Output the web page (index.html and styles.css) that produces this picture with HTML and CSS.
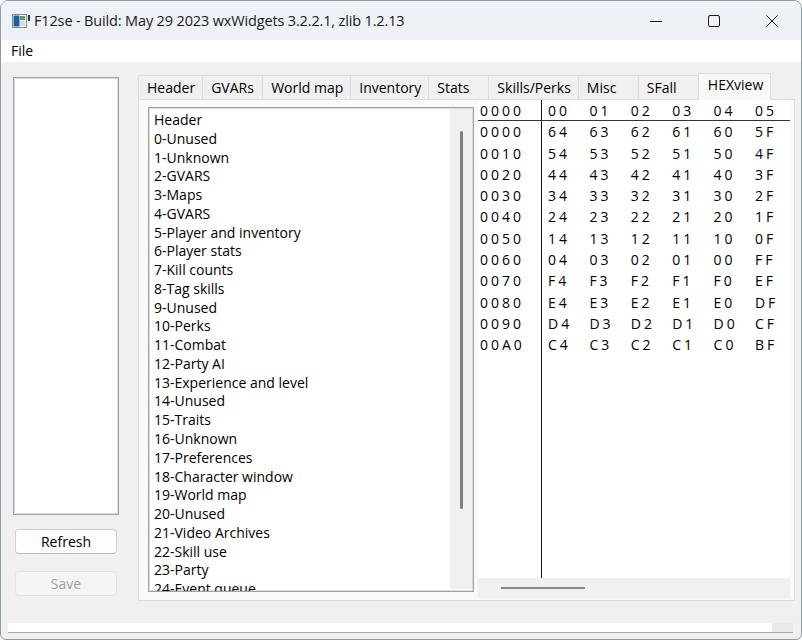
FILE: index.html
```html
<!DOCTYPE html>
<html lang="en">

<head>
    <meta charset="UTF-8">
    <title>F12se - Build: May 29 2023 wxWidgets 3.2.2.1, zlib 1.2.13</title>
    <link rel="stylesheet" href="styles.css">
</head>

<body>
    <div class="window">
        <!-- Title bar -->
        <div class="titlebar">
            <svg class="app-icon" width="18" height="14" viewBox="0 0 18 14">
                <rect x="0.5" y="0.5" width="14" height="13" fill="#fff" stroke="#7f8c99"/>
                <rect x="1.5" y="1.5" width="6" height="11" fill="#1f5f9f"/>
                <rect x="8" y="2" width="5" height="4" fill="#4fa36b"/>
                <rect x="8" y="7" width="5" height="5" fill="#d8dde3"/>
                <rect x="16" y="1" width="2" height="6" fill="#333"/>
            </svg>
            <span class="title">F12se - Build: May 29 2023 wxWidgets 3.2.2.1, zlib 1.2.13</span>
            <div class="caption-buttons">
                <span class="caption-btn">
                    <svg width="14" height="14" viewBox="0 0 14 14"><path d="M1 7.5h12" stroke="#1b1b1b" stroke-width="1"/></svg>
                </span>
                <span class="caption-btn">
                    <svg width="14" height="14" viewBox="0 0 14 14"><rect x="1.5" y="1.5" width="11" height="11" rx="1.5" fill="none" stroke="#1b1b1b" stroke-width="1"/></svg>
                </span>
                <span class="caption-btn">
                    <svg width="14" height="14" viewBox="0 0 14 14"><path d="M1.5 1.5l11 11M12.5 1.5l-11 11" stroke="#1b1b1b" stroke-width="1"/></svg>
                </span>
            </div>
        </div>

        <!-- Menu -->
        <div class="menubar">
            <span class="menu-item">File</span>
        </div>

        <div class="client">
            <!-- Left column: save slots -->
            <div class="sidebar">
                <div class="listbox slot-list"></div>
                <button class="btn refresh-btn">Refresh</button>
                <button class="btn save-btn" disabled>Save</button>
            </div>

            <!-- Notebook -->
            <div class="notebook">
                <div class="tabs">
                    <span class="tab">Header</span>
                    <span class="tab">GVARs</span>
                    <span class="tab">World map</span>
                    <span class="tab">Inventory</span>
                    <span class="tab">Stats</span>
                    <span class="tab">Skills/Perks</span>
                    <span class="tab">Misc</span>
                    <span class="tab">SFall</span>
                    <span class="tab active">HEXview</span>
                </div>
                <div class="page">
                    <div class="listbox sections">
                        <ul class="section-list">
                            <li>Header</li>
                            <li>0-Unused</li>
                            <li>1-Unknown</li>
                            <li>2-GVARS</li>
                            <li>3-Maps</li>
                            <li>4-GVARS</li>
                            <li>5-Player and inventory</li>
                            <li>6-Player stats</li>
                            <li>7-Kill counts</li>
                            <li>8-Tag skills</li>
                            <li>9-Unused</li>
                            <li>10-Perks</li>
                            <li>11-Combat</li>
                            <li>12-Party AI</li>
                            <li>13-Experience and level</li>
                            <li>14-Unused</li>
                            <li>15-Traits</li>
                            <li>16-Unknown</li>
                            <li>17-Preferences</li>
                            <li>18-Character window</li>
                            <li>19-World map</li>
                            <li>20-Unused</li>
                            <li>21-Video Archives</li>
                            <li>22-Skill use</li>
                            <li>23-Party</li>
                            <li>24-Event queue</li>
                        </ul>
                        <div class="vscroll"><div class="vthumb"></div></div>
                    </div>

                    <div class="hexview">
                        <div class="hex-grid">
                            <span class="hx head label">0000</span>
                            <span class="hx head">00</span><span class="hx head">01</span><span class="hx head">02</span>
                            <span class="hx head">03</span><span class="hx head">04</span><span class="hx head">05</span>

                            <span class="hx label">0000</span>
                            <span class="hx">64</span><span class="hx">63</span><span class="hx">62</span><span class="hx">61</span><span class="hx">60</span><span class="hx">5F</span>
                            <span class="hx label">0010</span>
                            <span class="hx">54</span><span class="hx">53</span><span class="hx">52</span><span class="hx">51</span><span class="hx">50</span><span class="hx">4F</span>
                            <span class="hx label">0020</span>
                            <span class="hx">44</span><span class="hx">43</span><span class="hx">42</span><span class="hx">41</span><span class="hx">40</span><span class="hx">3F</span>
                            <span class="hx label">0030</span>
                            <span class="hx">34</span><span class="hx">33</span><span class="hx">32</span><span class="hx">31</span><span class="hx">30</span><span class="hx">2F</span>
                            <span class="hx label">0040</span>
                            <span class="hx">24</span><span class="hx">23</span><span class="hx">22</span><span class="hx">21</span><span class="hx">20</span><span class="hx">1F</span>
                            <span class="hx label">0050</span>
                            <span class="hx">14</span><span class="hx">13</span><span class="hx">12</span><span class="hx">11</span><span class="hx">10</span><span class="hx">0F</span>
                            <span class="hx label">0060</span>
                            <span class="hx">04</span><span class="hx">03</span><span class="hx">02</span><span class="hx">01</span><span class="hx">00</span><span class="hx">FF</span>
                            <span class="hx label">0070</span>
                            <span class="hx">F4</span><span class="hx">F3</span><span class="hx">F2</span><span class="hx">F1</span><span class="hx">F0</span><span class="hx">EF</span>
                            <span class="hx label">0080</span>
                            <span class="hx">E4</span><span class="hx">E3</span><span class="hx">E2</span><span class="hx">E1</span><span class="hx">E0</span><span class="hx">DF</span>
                            <span class="hx label">0090</span>
                            <span class="hx">D4</span><span class="hx">D3</span><span class="hx">D2</span><span class="hx">D1</span><span class="hx">D0</span><span class="hx">CF</span>
                            <span class="hx label">00A0</span>
                            <span class="hx">C4</span><span class="hx">C3</span><span class="hx">C2</span><span class="hx">C1</span><span class="hx">C0</span><span class="hx">BF</span>
                        </div>
                        <div class="hscroll"><div class="hthumb"></div></div>
                    </div>
                </div>
            </div>
        </div>

        <!-- Status bar -->
        <div class="statusbar">
            <div class="status-field"></div>
            <div class="status-grip"></div>
        </div>
    </div>
</body>

</html>
```

FILE: styles.css
```css
/* Reset */
* {
    margin: 0;
    padding: 0;
    box-sizing: border-box;
}

body {
    font-family: 'Open Sans', 'Noto Sans', sans-serif;
    background-color: #ffffff;
    color: #000;
    width: 802px;
    height: 640px;
    overflow: hidden;
}

/* Window frame */
.window {
    width: 802px;
    height: 640px;
    display: flex;
    flex-direction: column;
    background-color: #f0f0f0;
    border: 1px solid #8e9aa8;
    border-radius: 8px 8px 6px 6px;
    overflow: hidden;
}

/* Title bar */
.titlebar {
    height: 39px;
    flex: none;
    display: flex;
    align-items: center;
    background-color: #eef2f7;
    padding-left: 11px;
}

.app-icon {
    flex: none;
    margin-top: 1px;
}

.title {
    margin-left: 4px;
    font-size: 14.5px;
    letter-spacing: -0.15px;
    color: #1a1a1a;
    white-space: nowrap;
}

.caption-buttons {
    margin-left: auto;
    display: flex;
    height: 100%;
}

.caption-btn {
    width: 58px;
    height: 100%;
    display: flex;
    align-items: center;
    justify-content: center;
}

/* Menu bar */
.menubar {
    height: 22px;
    flex: none;
    background-color: #fff;
    display: flex;
    align-items: center;
    padding-left: 10px;
}

.menu-item {
    font-size: 14px;
    line-height: 18px;
}

/* Client area */
.client {
    flex: none;
    display: flex;
    padding: 10px 6px 0 12px;
}

.sidebar {
    width: 106px;
    flex: none;
    margin-top: 5px;
    display: flex;
    flex-direction: column;
    align-items: center;
}

.listbox {
    background-color: #fff;
    border: 1px solid #9fa3a8;
    box-shadow: inset 0 0 0 1px #d9dbde;
}

.slot-list {
    width: 106px;
    height: 438px;
}

.btn {
    width: 102px;
    height: 25px;
    font-family: inherit;
    font-size: 14px;
    border-radius: 4px;
    border: 1px solid #d0d0d0;
    border-bottom-color: #bcbcbc;
    background-color: #fdfdfd;
    color: #000;
}

.refresh-btn {
    margin-top: 14px;
}

.save-btn {
    margin-top: 17px;
    background-color: #f5f5f5;
    border-color: #e3e3e3;
    color: #a0a0a0;
}

/* Notebook */
.notebook {
    margin-left: 19px;
    flex: 1;
    display: flex;
    flex-direction: column;
}

.tabs {
    height: 27px;
    display: flex;
    align-items: flex-end;
}

.tab {
    height: 24px;
    min-width: 60px;
    padding: 0 7px 0 8px;
    font-size: 14px;
    line-height: 23px;
    background-color: #f0f0f0;
    border-top: 1px solid #dddddd;
    border-right: 1px solid #dddddd;
    white-space: nowrap;
}

.tab:first-child {
    border-left: 1px solid #dddddd;
}

.tab.active {
    height: 27px;
    line-height: 22px;
    padding-left: 9px;
    background-color: #f9f9f9;
    border-left: 1px solid #dddddd;
    margin-left: -1px;
    position: relative;
    margin-bottom: -1px;
}

.page {
    height: 502px;
    display: flex;
    align-items: flex-start;
    background-color: #f9f9f9;
    border: 1px solid #dddddd;
}

/* Sections list */
.sections {
    width: 326px;
    height: 485px;
    margin: 7px 4px 0 9px;
    display: flex;
    overflow: hidden;
}

.section-list {
    flex: 1;
    list-style: none;
    padding: 3px 0 0 5px;
    font-size: 14px;
    line-height: 18.76px;
    color: #000;
    overflow: hidden;
    white-space: nowrap;
}

.vscroll {
    width: 22px;
    flex: none;
    margin: 1px 1px 2px 0;
    background-color: #f0f0f0;
    display: flex;
    justify-content: center;
    padding-top: 22px;
}

.vthumb {
    width: 3px;
    height: 378px;
    border-radius: 2px;
    background-color: #808080;
}

/* Hex view */
.hexview {
    width: 312px;
    height: 498px;
    display: flex;
    flex-direction: column;
}

.hex-grid {
    flex: 1;
    display: grid;
    grid-template-columns: 64px repeat(6, 41.4px);
    grid-auto-rows: 21.3px;
    align-content: start;
    background: linear-gradient(#111, #111) 63px 0 / 1px 100% no-repeat, #fff;
}

.hx {
    font-size: 14px;
    line-height: 21px;
    letter-spacing: 3px;
    padding-left: 6px;
    white-space: nowrap;
}

.hx.label {
    padding-left: 2px;
}

.hx.head {
    border-bottom: 1px solid #333;
}

.hscroll {
    height: 20px;
    flex: none;
    background-color: #f0f0f0;
    padding: 9px 0 0 23px;
}

.hthumb {
    width: 84px;
    height: 2px;
    background-color: #858585;
}

/* Status bar */
.statusbar {
    height: 10px;
    flex: none;
    display: flex;
    margin: 22px 8px 0 7px;
    border-bottom: 1px solid #a6a6a6;
}

.status-field {
    flex: 1;
    background-color: #fff;
}

.status-grip {
    width: 21px;
    background-color: #e9e9e9;
}
```
